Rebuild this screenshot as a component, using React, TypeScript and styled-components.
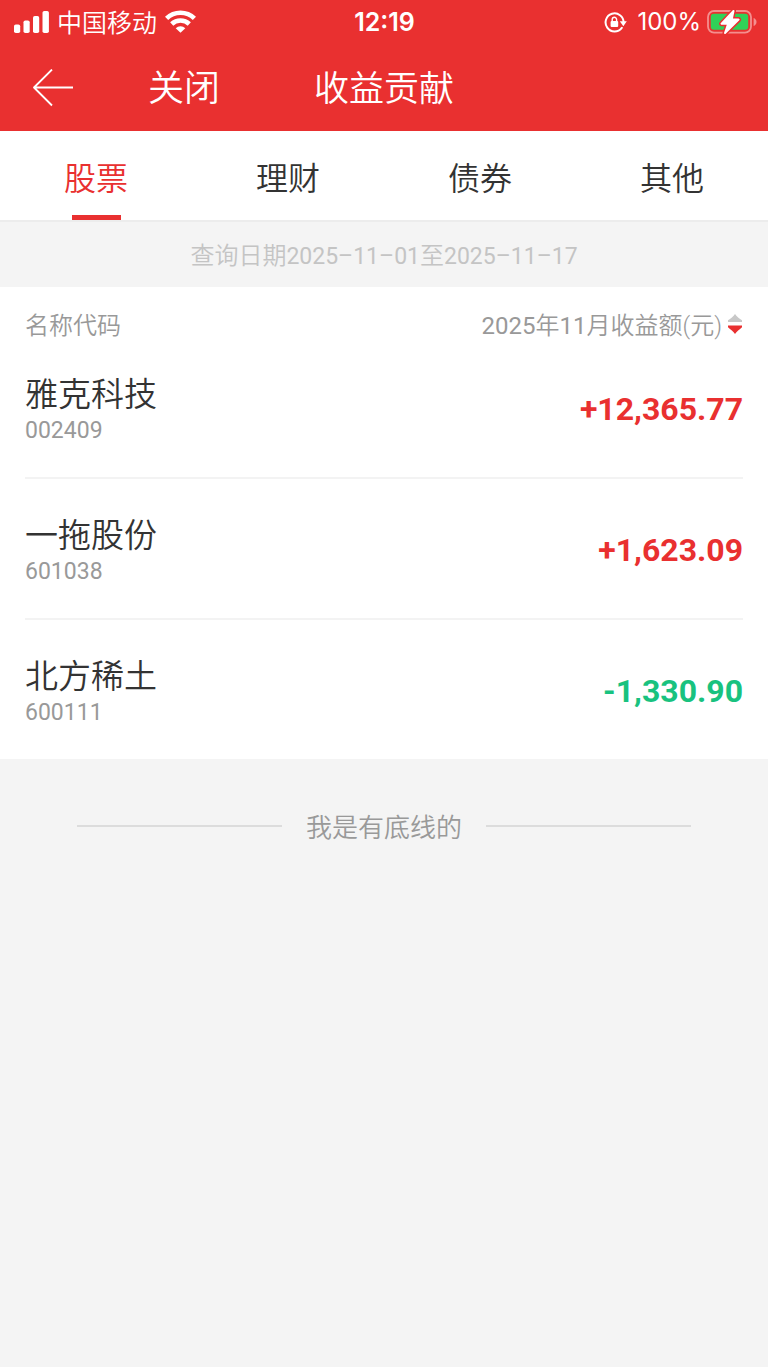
import React, { useState } from "react";
import styled, { createGlobalStyle } from "styled-components";

const color = {
  red: "#e93030",
  green: "#19c27f",
  ink: "#333333",
  muted: "#999999",
  faint: "#c4c4c4",
  line: "#f3f3f3",
  page: "#f4f4f4",
};

const GlobalStyle = createGlobalStyle`
  *, *::before, *::after { box-sizing: border-box; }
  body {
    margin: 0;
    background: ${color.page};
    color: ${color.ink};
    font-family: Roboto, "Noto Sans CJK SC", sans-serif;
    font-weight: 350;
  }
  button {
    margin: 0;
    padding: 0;
    border: 0;
    background: none;
    color: inherit;
    font: inherit;
    cursor: pointer;
  }
  svg { display: block; flex: none; }
`;

const Page = styled.div`
  display: flex;
  flex-direction: column;
  min-height: 100vh;
`;

const Header = styled.header`
  background: ${color.red};
  color: #fff;
`;

const StatusBar = styled.div`
  display: grid;
  grid-template-columns: 1fr auto 1fr;
  align-items: center;
  height: 44px;
  padding: 0 11px 0 12px;
  font-family: Inter, "Noto Sans CJK SC", sans-serif;
  font-size: 24px;
  line-height: 32px;
`;

const StatusGroup = styled.div<{ $end?: boolean }>`
  display: flex;
  align-items: center;
  justify-content: ${(p) => (p.$end ? "flex-end" : "flex-start")};
  gap: ${(p) => (p.$end ? 6 : 8)}px;
  padding-left: 2px;
`;

const Carrier = styled.span`
  padding-top: 1px;
  font-size: 25px;
`;

const Clock = styled.time`
  font-size: 25px;
  font-weight: 600;
`;

const Percent = styled.span`
  padding-left: 4px;
  font-weight: 400;
`;

const NavBar = styled.nav`
  display: grid;
  grid-template-columns: 1fr auto 1fr;
  align-items: center;
  height: 87px;
  padding: 0 32px;
`;

const NavActions = styled.div`
  display: flex;
  align-items: center;
  gap: 74px;
`;

const CloseButton = styled.button`
  padding-top: 2px;
  font-size: 36px;
  line-height: 48px;
`;

const Title = styled.h1`
  margin: 0;
  padding-top: 4px;
  font-size: 35px;
  font-weight: inherit;
  line-height: 48px;
`;

const Tabs = styled.div`
  display: grid;
  grid-template-columns: repeat(4, 1fr);
  height: 91px;
  border-bottom: 2px solid #ececec;
  background: #fff;
`;

const Tab = styled.button<{ $active: boolean }>`
  display: flex;
  flex-direction: column;
  align-items: center;
  justify-content: space-between;
  padding-top: 24px;
  color: ${(p) => (p.$active ? color.red : color.ink)};
  font-size: 32px;
  line-height: 48px;

  &::after {
    content: "";
    width: 49px;
    height: 5px;
    background: ${(p) => (p.$active ? color.red : "transparent")};
  }
`;

const QueryRange = styled.p`
  margin: 0;
  padding: 18px 0 14px;
  color: ${color.faint};
  font-size: 24px;
  line-height: 32px;
  text-align: center;
`;

const DateText = styled.time`
  font-size: 23px;
  font-weight: 400;
`;

const Panel = styled.main`
  padding: 0 25px;
  background: #fff;
`;

const Table = styled.table`
  width: 100%;
  border-collapse: separate;
  border-spacing: 0;
`;

const HeadCell = styled.th<{ $end?: boolean }>`
  height: 51px;
  padding: 27px 0 0;
  color: ${color.muted};
  font-size: 24px;
  font-weight: inherit;
  line-height: 24px;
  text-align: ${(p) => (p.$end ? "right" : "left")};
`;

const SortButton = styled.button`
  display: inline-flex;
  align-items: flex-start;
  gap: 5px;
  vertical-align: top;
`;

const Digits = styled.span`
  font-weight: 400;
`;

const Row = styled.tr`
  &:not(:last-child) > * {
    border-bottom: 2px solid ${color.line};
  }

  &:last-child > * {
    height: 139px;
  }
`;

const NameCell = styled.th`
  height: 141px;
  padding: 6px 0 0;
  font-weight: inherit;
  text-align: left;
`;

const StockName = styled.div`
  font-size: 33px;
  line-height: 40px;
`;

const StockCode = styled.div`
  color: ${color.muted};
  font-size: 23px;
  font-weight: 400;
  line-height: 32px;
`;

const Amount = styled.td<{ $gain: boolean }>`
  padding: 2px 0 0;
  color: ${(p) => (p.$gain ? color.red : color.green)};
  font-size: 32px;
  font-weight: 700;
  line-height: 40px;
  text-align: right;
`;

const EndNote = styled.footer`
  display: grid;
  grid-template-columns: 1fr auto 1fr;
  align-items: center;
  gap: 24px;
  padding: 45px 10%;
  color: ${color.muted};

  &::before,
  &::after {
    content: "";
    height: 2px;
    background: #dcdcdc;
  }
`;

const EndText = styled.span`
  padding-top: 4px;
  font-size: 26px;
  line-height: 40px;
`;

const SignalIcon = () => (
  <svg width="35" height="22" viewBox="0 0 35 22" fill="#fff" aria-hidden="true">
    <rect x="0" y="13.5" width="6.2" height="8.5" rx="1.8" />
    <rect x="9.5" y="9.5" width="6.2" height="12.5" rx="1.8" />
    <rect x="19" y="5" width="6.2" height="17" rx="1.8" />
    <rect x="28.5" y="0" width="6.4" height="22" rx="1.8" />
  </svg>
);

const WifiIcon = () => (
  <svg width="31" height="24" viewBox="0 0 31 24" aria-hidden="true">
    <g fill="none" stroke="#fff" strokeWidth="4.6">
      <path d="M1.6 8.4a20 20 0 0 1 27.8 0" />
      <path d="M6.7 14a12.8 12.8 0 0 1 17.6 0" />
    </g>
    <path d="M15.5 22.8l-4.8-4.6a7 7 0 0 1 9.6 0z" fill="#fff" />
  </svg>
);

const RotationLockIcon = () => (
  <svg width="23" height="21" viewBox="0 0 23 21" aria-hidden="true">
    <path
      d="M19.6 10.5A9 9 0 1 0 17.8 15.8"
      fill="none"
      stroke="#fff"
      strokeWidth="2"
      strokeLinecap="round"
    />
    <path d="M15.8 9.2H22.8L19.3 14.2z" fill="#fff" />
    <rect x="6.6" y="9" width="7.6" height="6" rx="1" fill="#fff" />
    <path d="M8.2 9.6V7.5a2.2 2.2 0 0 1 4.4 0V9.6" fill="none" stroke="#fff" strokeWidth="1.4" />
  </svg>
);

const boltPath = "M26.5 1L14.6 13.7H21.2L18 23L31.6 9.6H24.7Z";

const BatteryIcon = () => (
  <svg width="50" height="24" viewBox="0 0 50 24" aria-hidden="true">
    <rect x="1" y="1" width="43" height="21.6" rx="6" fill="none" stroke="#f48f8f" strokeWidth="1.8" />
    <path d="M46.6 8V16C48.2 15.5 49.5 14 49.5 12S48.2 8.5 46.6 8Z" fill="#f48f8f" />
    <rect x="3.8" y="3.8" width="37.4" height="16" rx="3" fill="#30d158" />
    <path d={boltPath} fill={color.red} stroke={color.red} strokeWidth="5" strokeLinejoin="round" />
    <path d={boltPath} fill="#fff" stroke="#fff" strokeWidth="2" strokeLinejoin="round" />
  </svg>
);

const BackIcon = () => (
  <svg width="42" height="38" viewBox="0 0 42 38" fill="none" stroke="#fff" strokeWidth="1.8" aria-hidden="true">
    <path d="M20 .5L2 18.5L20 36.5M2 18.5H41" strokeLinejoin="round" />
  </svg>
);

const SortIcon = () => (
  <svg width="16" height="20" viewBox="0 0 16 20" aria-hidden="true">
    <path d="M8 0C9.5 2.5 12.5 4.5 15 6.3V8H1V6.3C3.5 4.5 6.5 2.5 8 0z" fill="#c8c8c8" />
    <path d="M8 20C9.5 17.5 12.5 15.5 15 13.3V11.6H1V13.3C3.5 15.5 6.5 17.5 8 20z" fill={color.red} />
  </svg>
);

const tabs = ["股票", "理财", "债券", "其他"];

const stocks = [
  { name: "雅克科技", code: "002409", amount: "+12,365.77" },
  { name: "一拖股份", code: "601038", amount: "+1,623.09" },
  { name: "北方稀土", code: "600111", amount: "-1,330.90" },
];

export default function App() {
  const [active, setActive] = useState(tabs[0]);

  return (
    <Page>
      <GlobalStyle />
      <Header>
        <StatusBar>
          <StatusGroup>
            <SignalIcon />
            <Carrier>中国移动</Carrier>
            <WifiIcon />
          </StatusGroup>
          <Clock>12:19</Clock>
          <StatusGroup $end>
            <RotationLockIcon />
            <Percent>100%</Percent>
            <BatteryIcon />
          </StatusGroup>
        </StatusBar>
        <NavBar>
          <NavActions>
            <button type="button" aria-label="返回">
              <BackIcon />
            </button>
            <CloseButton type="button">关闭</CloseButton>
          </NavActions>
          <Title>收益贡献</Title>
        </NavBar>
      </Header>

      <Tabs role="tablist">
        {tabs.map((tab) => (
          <Tab
            key={tab}
            type="button"
            role="tab"
            aria-selected={tab === active}
            $active={tab === active}
            onClick={() => setActive(tab)}
          >
            {tab}
          </Tab>
        ))}
      </Tabs>

      <QueryRange>
        查询日期<DateText>2025–11–01</DateText>至<DateText>2025–11–17</DateText>
      </QueryRange>

      <Panel>
        <Table>
          <thead>
            <tr>
              <HeadCell scope="col">名称代码</HeadCell>
              <HeadCell scope="col" $end aria-sort="descending">
                <SortButton type="button">
                  <span>
                    <Digits>2025</Digits>年<Digits>11</Digits>月收益额(元)
                  </span>
                  <SortIcon />
                </SortButton>
              </HeadCell>
            </tr>
          </thead>
          <tbody>
            {stocks.map((stock) => (
              <Row key={stock.code}>
                <NameCell scope="row">
                  <StockName>{stock.name}</StockName>
                  <StockCode>{stock.code}</StockCode>
                </NameCell>
                <Amount $gain={stock.amount.startsWith("+")}>{stock.amount}</Amount>
              </Row>
            ))}
          </tbody>
        </Table>
      </Panel>

      <EndNote>
        <EndText>我是有底线的</EndText>
      </EndNote>
    </Page>
  );
}
